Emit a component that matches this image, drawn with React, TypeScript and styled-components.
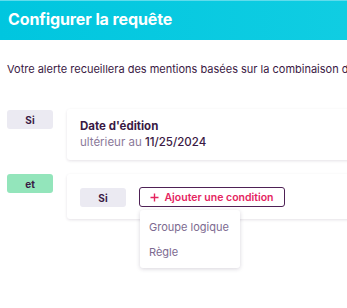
import React from 'react';
import styled, { createGlobalStyle } from 'styled-components';

const GlobalStyle = createGlobalStyle`
  body {
    margin: 0;
    font-family: Inter, 'Noto Sans', sans-serif;
    background: #fff;
    overflow: hidden;
  }
`;

const Page = styled.div`
  width: 347px;
  height: 308px;
  overflow: hidden;
`;

const Header = styled.div`
  height: 40px;
  display: flex;
  align-items: center;
  padding: 0 8px;
  background: linear-gradient(90deg, #00c6df 0%, #10cde2 100%);
  border-top: 1px solid #5fdcec;
  box-sizing: border-box;
`;

const Title = styled.h1`
  margin: 0 0 4px;
  font-size: 16px;
  font-weight: 700;
  color: #fff;
  letter-spacing: -0.1px;
`;

const Body = styled.div`
  width: 640px;
  padding: 22px 7px 0;
`;

const Intro = styled.p`
  margin: 0 0 33px;
  font-size: 11px;
  line-height: 14px;
  color: #3a1944;
  white-space: nowrap;
`;

const Row = styled.div`
  display: flex;
  align-items: flex-start;
  gap: 14px;
  margin-bottom: 14px;
`;

const Badge = styled.div<{ $tone: 'grey' | 'green' }>`
  width: 46px;
  height: 19px;
  border-radius: 3px;
  display: flex;
  align-items: center;
  justify-content: center;
  font-size: 10px;
  font-weight: 700;
  color: #3a1944;
  background: ${({ $tone }) => ($tone === 'green' ? '#93e5bb' : '#ebeaf2')};
  margin-top: ${({ $tone }) => ($tone === 'green' ? '0' : '1px')};
  flex-shrink: 0;
`;

const Card = styled.div`
  flex: 1;
  background: #fff;
  border-radius: 3px;
  box-shadow: 0 1px 3px rgba(40, 20, 60, 0.12);
`;

const RuleCard = styled(Card)`
  padding: 10px 13px 10px;
`;

const RuleName = styled.div`
  font-size: 11.5px;
  font-weight: 700;
  color: #3a1944;
  line-height: 15px;
`;

const RuleDetail = styled.div`
  font-size: 11.5px;
  line-height: 16px;
  color: #8b7a9a;

  strong {
    font-weight: 500;
    color: #3a1944;
  }
`;

const GroupCard = styled(Card)`
  height: 45px;
  display: flex;
  align-items: flex-start;
  gap: 13px;
  padding: 13px 13px 0;
  box-sizing: border-box;
`;

const AddWrap = styled.div`
  position: relative;
`;

const AddButton = styled.button`
  height: 20px;
  width: 146px;
  display: flex;
  align-items: center;
  justify-content: center;
  gap: 5px;
  padding: 0;
  background: #fff;
  border: 1px solid #4e2155;
  border-radius: 3px;
  font-family: inherit;
  font-size: 10.5px;
  font-weight: 600;
  color: #e5245f;
  cursor: pointer;
`;

const Menu = styled.div`
  position: absolute;
  top: 23px;
  left: 1px;
  width: 100px;
  padding: 4px 0;
  background: #fff;
  border-radius: 3px;
  box-shadow: 0 1px 4px rgba(40, 20, 60, 0.18);
`;

const MenuItem = styled.div`
  padding: 0 9px;
  height: 25px;
  display: flex;
  align-items: center;
  font-size: 11px;
  color: #7c6a90;
`;

const Plus = () => (
  <svg width="9" height="9" viewBox="0 0 9 9">
    <path d="M4.5 0.5v8M0.5 4.5h8" stroke="#e5245f" strokeWidth="1.4" />
  </svg>
);

const App = () => (
  <Page>
    <GlobalStyle />
    <Header>
      <Title>Configurer la requête</Title>
    </Header>
    <Body>
      <Intro>Votre alerte recueillera des mentions basées sur la combinaison de règles ci-dessous</Intro>
      <Row>
        <Badge $tone="grey">Si</Badge>
        <RuleCard>
          <RuleName>Date d'édition</RuleName>
          <RuleDetail>
            ultérieur au <strong>11/25/2024</strong>
          </RuleDetail>
        </RuleCard>
      </Row>
      <Row>
        <Badge $tone="green">et</Badge>
        <GroupCard>
          <Badge $tone="grey">Si</Badge>
          <AddWrap>
            <AddButton>
              <Plus />
              Ajouter une condition
            </AddButton>
            <Menu>
              <MenuItem>Groupe logique</MenuItem>
              <MenuItem>Règle</MenuItem>
            </Menu>
          </AddWrap>
        </GroupCard>
      </Row>
    </Body>
  </Page>
);

export default App;
